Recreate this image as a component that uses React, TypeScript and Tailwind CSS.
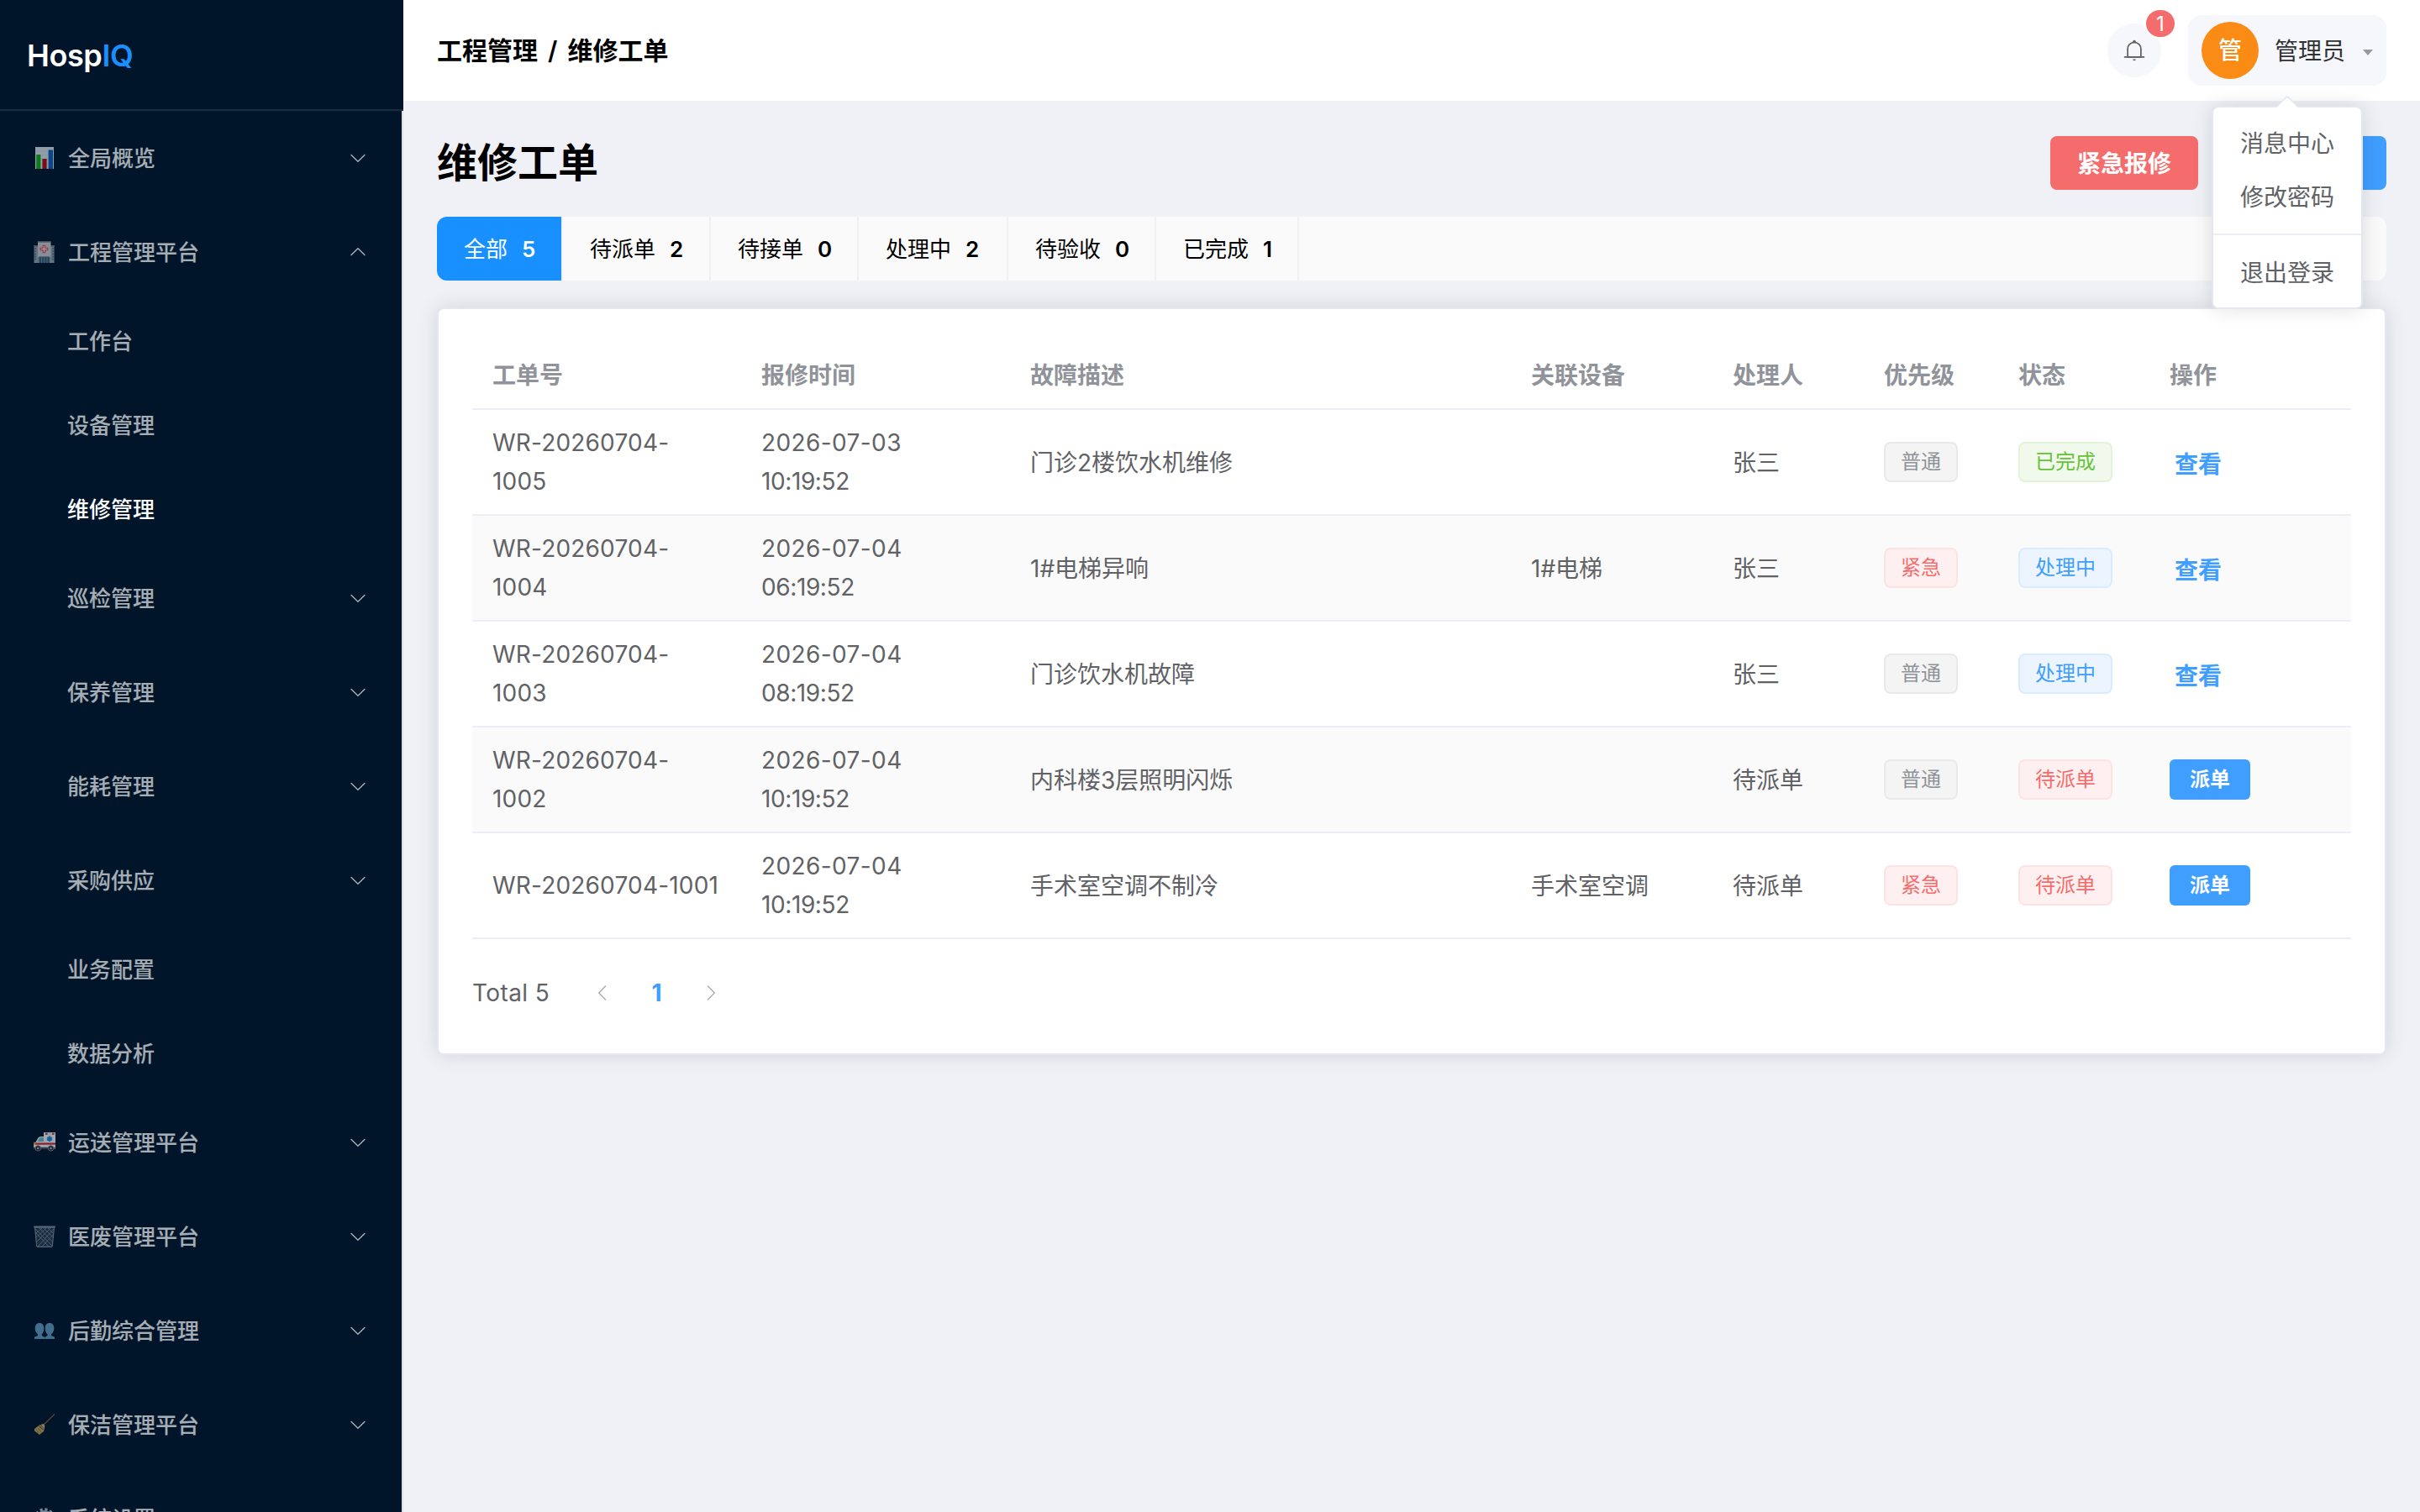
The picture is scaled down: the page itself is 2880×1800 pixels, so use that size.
import { ReactNode } from 'react';
import clsx from 'clsx';

interface MenuItem {
    label: string;
    icon?: ReactNode;
    arrow?: 'down' | 'up';
    active?: boolean;
}

interface Order {
    id: string[];
    date: string;
    time: string;
    fault: string;
    device: string;
    handler: string;
    priority: '普通' | '紧急';
    status: '已完成' | '处理中' | '待派单';
}

const ChartIcon = () => (
    <svg viewBox="0 0 26 26" className="size-[26px]">
        <rect x="2" y="0" width="22" height="26" fill="#dfe8ee" />
        <path d="M2 5h22M2 10h22M2 15h22M2 20h22" stroke="#c3d0da" strokeWidth="0.6" />
        <rect x="3.2" y="9" width="5.2" height="17" fill="#12b312" />
        <rect x="10.4" y="14" width="5.2" height="12" fill="#bd0a12" />
        <rect x="17.6" y="3.5" width="5.4" height="22.5" fill="#0d5fc0" />
    </svg>
);

const HospitalIcon = () => (
    <svg viewBox="0 0 26 26" className="size-[26px]">
        <rect x="0.5" y="5.5" width="24" height="20.5" fill="#9aa5ab" />
        <rect x="0" y="5" width="25" height="1.6" fill="#77736f" />
        <rect x="5" y="0.8" width="15.5" height="18" fill="#cfd0d3" />
        <rect x="4.8" y="0" width="16" height="1.6" fill="#77736f" />
        <path d="M2 8v15M23 8v15" stroke="#3f7184" strokeWidth="1.6" strokeDasharray="1.8 1.4" />
        <path
            d="M11.2 5.2h2.6v3h3v2.6h-3v3h-2.6v-3h-3V8.2h3z"
            fill="#f3dfe2"
            stroke="#e2444f"
            strokeWidth="1.1"
        />
        <rect x="6.5" y="18.5" width="12.5" height="7.5" fill="#3d6076" />
        <path d="M9.5 19v7M12.7 19v7M16 19v7" stroke="#7fa0b0" strokeWidth="0.7" />
    </svg>
);

const AmbulanceIcon = () => (
    <svg viewBox="0 0 26 26" className="size-[26px]">
        <path d="M12 1h14v20H0v-6l2.5-2.5L5.500 7.500Q6.500 6 8.500 6H12z" fill="#f4f6f8" />
        <path d="M4.500 12l2.700-4.200Q7.800 7 9 7h3v5z" fill="#6fbccd" />
        <rect x="12.5" y="1" width="13.500" height="3" fill="#e3e6ea" />
        <rect x="14" y="1.800" width="2.500" height="2" fill="#d8262c" />
        <rect x="22" y="1.800" width="2.500" height="2" fill="#d8262c" />
        <path d="M19 5.500v6.500M16.200 7.200l5.600 3.200M21.800 7.200l-5.600 3.200" stroke="#1789e0" strokeWidth="2.200" />
        <rect x="1" y="13.500" width="25" height="2.200" fill="#e0222a" />
        <rect x="0" y="12.800" width="2.500" height="3" fill="#f0a33a" />
        <rect x="0" y="18.800" width="25.500" height="2.400" fill="#4b4e55" />
        <circle cx="5.200" cy="20" r="3.200" fill="#24272c" stroke="#85898f" />
        <circle cx="5.200" cy="20" r="1.300" fill="#b8bcc2" />
        <circle cx="20.500" cy="20" r="3.200" fill="#24272c" stroke="#85898f" />
        <circle cx="20.500" cy="20" r="1.300" fill="#b8bcc2" />
    </svg>
);

const TrashIcon = () => (
    <svg viewBox="0 0 26 26" className="size-[26px]">
        <path d="M1 2h24l-2.500 23q0 1-1.500 1H5q-1.500 0-1.500-1z" fill="#2b3a4a" />
        <path
            d="M2 8l16 17M2 4l20 20M7 3l16 17M12 3l12 12M17 3l7 7M24 4L5 25M24 10L10 25M20 3L3 20M15 3L2 15M10 3L2 10"
            stroke="#8296aa"
            strokeWidth="0.8"
        />
        <path d="M1.500 2l2.200 23M24.500 2l-2.200 23" stroke="#8296aa" strokeWidth="1" />
        <rect x="0" y="0.500" width="26" height="2.200" rx="1.100" fill="#8296aa" />
        <path d="M4 25.300h18" stroke="#8296aa" strokeWidth="1.200" />
    </svg>
);

const PeopleIcon = () => (
    <svg viewBox="0 0 26 26" className="size-[26px]">
        <g fill="#669cc2">
            <path d="M7 4c3.500 0 5.300 2.400 5.300 6.500 0 3-1 5.500-2.500 7v1.500l3.500 2V23H1v-2.200L5 19v-1.500c-1.900-1.500-3.300-4-3.300-7C1.700 6.400 3.500 4 7 4z" />
            <path d="M19 4c3.500 0 5.300 2.400 5.300 6.500 0 3-1.400 5.500-3.300 7V19l4 1.800V23H13.300v-2l3.200-2v-1.500c-1.700-1.500-2.800-4-2.800-7C13.700 6.400 15.500 4 19 4z" />
        </g>
    </svg>
);

const BroomIcon = () => (
    <svg viewBox="0 0 26 26" className="size-[26px]">
        <path d="M11.500 13.500L25 0.500" stroke="#8a5c38" strokeWidth="1.300" />
        <path d="M7.500 13l5.500 4.500-1 3.500-5 4L1 20.500 1 18z" fill="#c0a860" />
        <path d="M6.500 14.500l5 4.500" stroke="#8a4a30" strokeWidth="1.200" />
        <path d="M8.500 13l3-1 2 2.500-.8 3z" fill="#d3bc74" />
        <path d="M3 18.500l3 5M5.500 17l3.500 5.500" stroke="#7d6a35" strokeWidth="0.8" />
    </svg>
);

const GearIcon = () => (
    <svg viewBox="0 0 26 26" className="size-[26px]">
        <circle cx="13" cy="13" r="8.5" fill="none" stroke="#b4c2d0" strokeWidth="3" />
        <circle cx="13" cy="13" r="11.2" fill="none" stroke="#b4c2d0" strokeWidth="3" strokeDasharray="3.2 2.664" />
        <circle cx="13" cy="13" r="2.5" fill="#b4c2d0" />
        <path d="M13 5v16M6 9l14 8M20 9L6 17" stroke="#b4c2d0" strokeWidth="1.2" />
    </svg>
);

const ArrowIcon = ({ className }: { className?: string }) => (
    <svg viewBox="0 0 1024 1024" fill="currentColor" className={clsx('size-6', className)}>
        <path d="M831.872 340.864 512 652.672 192.128 340.864a30.592 30.592 0 0 0-42.752 0 29.120 29.120 0 0 0 0 41.600L489.664 714.240a32 32 0 0 0 44.672 0l340.288-331.712a29.120 29.120 0 0 0 0-41.728 30.592 30.592 0 0 0-42.752 0z" />
    </svg>
);

const BellIcon = () => (
    <svg viewBox="0 0 1024 1024" fill="currentColor" className="size-7">
        <path d="M512 64a64 64 0 0 1 64 64v64H448v-64a64 64 0 0 1 64-64" />
        <path d="M256 768h512V448a256 256 0 1 0-512 0zm256-640a320 320 0 0 1 320 320v384H192V448a320 320 0 0 1 320-320" />
        <path d="M96 768h832q32 0 32 32t-32 32H96q-32 0-32-32t32-32m352 128h128a64 64 0 0 1-128 0" />
    </svg>
);

const menu: MenuItem[] = [
    { label: '全局概览', icon: <ChartIcon />, arrow: 'down' },
    { label: '工程管理平台', icon: <HospitalIcon />, arrow: 'up' },
    { label: '工作台' },
    { label: '设备管理' },
    { label: '维修管理', active: true },
    { label: '巡检管理', arrow: 'down' },
    { label: '保养管理', arrow: 'down' },
    { label: '能耗管理', arrow: 'down' },
    { label: '采购供应', arrow: 'down' },
    { label: '业务配置' },
    { label: '数据分析' },
    { label: '运送管理平台', icon: <AmbulanceIcon />, arrow: 'down' },
    { label: '医废管理平台', icon: <TrashIcon />, arrow: 'down' },
    { label: '后勤综合管理', icon: <PeopleIcon />, arrow: 'down' },
    { label: '保洁管理平台', icon: <BroomIcon />, arrow: 'down' },
    { label: '系统设置', icon: <GearIcon />, arrow: 'down' },
];

const tabs = [
    { label: '全部', count: 5, width: 'w-[150px]' },
    { label: '待派单', count: 2, width: 'w-[176px]' },
    { label: '待接单', count: 0, width: 'w-[176px]' },
    { label: '处理中', count: 2, width: 'w-[178px]' },
    { label: '待验收', count: 0, width: 'w-[176px]' },
    { label: '已完成', count: 1, width: 'w-[170px]' },
];

const columns = ['工单号', '报修时间', '故障描述', '关联设备', '处理人', '优先级', '状态', '操作'];

const orders: Order[] = [
    { id: ['WR-20260704-', '1005'], date: '2026-07-03', time: '10:19:52', fault: '门诊2楼饮水机维修', device: '', handler: '张三', priority: '普通', status: '已完成' },
    { id: ['WR-20260704-', '1004'], date: '2026-07-04', time: '06:19:52', fault: '1#电梯异响', device: '1#电梯', handler: '张三', priority: '紧急', status: '处理中' },
    { id: ['WR-20260704-', '1003'], date: '2026-07-04', time: '08:19:52', fault: '门诊饮水机故障', device: '', handler: '张三', priority: '普通', status: '处理中' },
    { id: ['WR-20260704-', '1002'], date: '2026-07-04', time: '10:19:52', fault: '内科楼3层照明闪烁', device: '', handler: '待派单', priority: '普通', status: '待派单' },
    { id: ['WR-20260704-1001'], date: '2026-07-04', time: '10:19:52', fault: '手术室空调不制冷', device: '手术室空调', handler: '待派单', priority: '紧急', status: '待派单' },
];

const tagColors = {
    普通: 'border-[#e9e9eb] bg-[#f4f4f5] text-[#909399]',
    紧急: 'border-[#fde2e2] bg-[#fef0f0] text-[#f56c6c]',
    已完成: 'border-[#e1f3d8] bg-[#f0f9eb] text-[#67c23a]',
    处理中: 'border-[#d9ecff] bg-[#ecf5ff] text-[#409eff]',
    待派单: 'border-[#fde2e2] bg-[#fef0f0] text-[#f56c6c]',
};

const rowGrid = 'grid grid-cols-[320px_320px_596px_240px_180px_160px_180px_240px] items-center border-b-2 border-[#ebeef5]';

function Tag({ text }: { text: keyof typeof tagColors }) {
    return (
        <span
            className={clsx(
                'inline-flex h-12 items-center rounded-lg border-2 px-[18px] text-2xl leading-none',
                tagColors[text],
            )}
        >
            {text}
        </span>
    );
}

function Sidebar() {
    return (
        <aside className="flex w-[480px] shrink-0 flex-col">
            <div className="flex h-[132px] shrink-0 items-center border-b-2 border-white/10 bg-[#001529] pt-0.5 pl-8 text-[36px] font-semibold tracking-[-0.4px] text-white">
                Hosp<span className="text-[#1890ff]">IQ</span>
            </div>
            <nav className="flex-1 overflow-hidden border-r-2 border-[#dcdfe6] bg-[#001529]">
                {menu.map((item) => (
                    <div
                        key={item.label}
                        className={clsx(
                            'flex items-center px-10 text-[26px] font-medium',
                            item.arrow ? 'h-28' : 'h-[100px]',
                            item.active ? 'text-white' : 'text-white/65',
                        )}
                    >
                        <span className={clsx('opacity-65', item.icon ? 'w-[41px]' : 'w-10')}>{item.icon}</span>
                        <span className="flex-1 pt-px">{item.label}</span>
                        {item.arrow && <ArrowIcon className={item.arrow === 'up' ? 'rotate-180' : ''} />}
                    </div>
                ))}
            </nav>
        </aside>
    );
}

function UserMenu() {
    return (
        <div className="absolute top-[108px] left-[28px] z-10 w-[180px] rounded-lg border-2 border-[#e4e7ed] bg-white py-2.5 text-[28px] text-[#606266] shadow-[0_0_24px_rgba(0,0,0,0.12)]">
            <span className="absolute -top-[11px] left-[78px] size-5 rotate-45 rounded-tl-sm border-t-2 border-l-2 border-[#e4e7ed] bg-white" />
            <div className="flex h-16 items-center px-8 pt-0.5">消息中心</div>
            <div className="flex h-16 items-center px-8 pt-0.5">修改密码</div>
            <div className="my-3 h-0.5 bg-[#ebeef5]" />
            <div className="flex h-16 items-center px-8 pt-0.5">退出登录</div>
        </div>
    );
}

function Header() {
    return (
        <header className="flex h-[120px] shrink-0 items-center justify-between bg-white px-10">
            <div className="pt-px text-[30px] font-semibold text-black [word-spacing:4.5px]">工程管理 / 维修工单</div>
            <div className="flex items-center gap-8">
                <div className="relative flex size-16 items-center justify-center rounded-full bg-[#f5f7fb] text-[#606266]">
                    <BellIcon />
                    <span className="absolute -top-[18px] left-11 flex h-9 w-[38px] items-center justify-center rounded-full border-2 border-white bg-[#f56c6c] pt-0.5 text-2xl leading-none text-white">
                        1
                    </span>
                </div>
                <div className="relative flex h-[84px] w-[236px] items-center rounded-2xl bg-[#f5f7fb] px-4">
                    <span className="flex size-[68px] items-center justify-center rounded-full bg-[#fa8c16] text-[28px] font-medium text-white">
                        管
                    </span>
                    <span className="ml-[19px] pt-px text-[28px] text-[#303133]">管理员</span>
                    <svg viewBox="0 0 12 7" className="mt-1 ml-[21px] h-[7px] w-3">
                        <path d="M0 0h12L6 7z" fill="#999" />
                    </svg>
                    <UserMenu />
                </div>
            </div>
        </header>
    );
}

export default function App() {
    return (
        <div className="flex h-[1800px] w-[2880px] overflow-hidden font-['Inter','Noto_Sans_CJK_SC',sans-serif]">
            <Sidebar />
            <div className="flex flex-1 flex-col bg-[#f0f1f6]">
                <Header />
                <main className="flex-1 px-10 pt-[42px]">
                    <div className="flex h-16 items-center justify-between">
                        <h1 className="text-[48px] leading-none font-bold text-black">维修工单</h1>
                        <div className="flex gap-6">
                            <button className="h-16 w-44 rounded-lg bg-[#f56c6c] pt-0.5 text-[28px] font-bold text-white">
                                紧急报修
                            </button>
                            <button className="h-16 w-[200px] rounded-lg bg-[#409eff]" />
                        </div>
                    </div>

                    <div className="mt-8 flex h-[76px] overflow-hidden rounded-xl bg-[#fafafa]">
                        {tabs.map((tab, i) => (
                            <button
                                key={tab.label}
                                className={clsx(
                                    'flex items-center gap-[17px] border-r-2 border-[#f0f0f0] bg-clip-padding pt-px pl-8 text-[26px]',
                                    tab.width,
                                    i === 0 ? 'bg-[#1890ff] text-white' : 'text-black',
                                )}
                            >
                                {tab.label}
                                <span className="font-semibold">{tab.count}</span>
                            </button>
                        ))}
                    </div>

                    <div className="mt-8 rounded-lg border-2 border-[#e4e7ed] bg-white p-10 shadow-[0_0_24px_rgba(0,0,0,0.12)]">
                        <div className="text-[28px] text-[#606266]">
                            <div className={clsx(rowGrid, 'h-20 font-semibold text-[#909399]')}>
                                {columns.map((column) => (
                                    <div key={column} className="px-6">
                                        {column}
                                    </div>
                                ))}
                            </div>
                            {orders.map((order, i) => (
                                <div key={i} className={clsx(rowGrid, 'h-[126px]', i % 2 === 1 && 'bg-[#fafafa]')}>
                                    <div className="px-6 pb-px leading-[46px] tracking-[0.2px] whitespace-nowrap">
                                        {order.id.map((part) => (
                                            <div key={part}>{part}</div>
                                        ))}
                                    </div>
                                    <div className="px-6 pb-px leading-[46px] whitespace-nowrap">
                                        <div className="tracking-[0.4px]">{order.date}</div>
                                        <div className="tracking-[-0.4px]">{order.time}</div>
                                    </div>
                                    <div className="px-6 pt-px">{order.fault}</div>
                                    <div className="px-6 pt-px">{order.device}</div>
                                    <div className="px-6 pt-px">{order.handler}</div>
                                    <div className="flex px-6">
                                        <Tag text={order.priority} />
                                    </div>
                                    <div className="flex px-6">
                                        <Tag text={order.status} />
                                    </div>
                                    <div className="flex px-6">
                                        {order.status === '待派单' ? (
                                            <button className="h-12 w-24 rounded-md bg-[#409eff] text-2xl font-bold text-white">
                                                派单
                                            </button>
                                        ) : (
                                            <button className="px-1.5 pt-[5px] font-bold text-[#409eff]">查看</button>
                                        )}
                                    </div>
                                </div>
                            ))}
                        </div>

                        <div className="mt-8 flex h-16 items-center text-[28px] text-[#606266]">
                            <span className="w-[123px] tracking-[0.4px] whitespace-nowrap">Total 5</span>
                            <span className="flex w-16 justify-center text-[#a8abb2]">
                                <ArrowIcon className="rotate-90" />
                            </span>
                            <span className="w-[65px] text-center font-bold text-[#409eff]">1</span>
                            <span className="flex w-16 justify-center text-[#a8abb2]">
                                <ArrowIcon className="-rotate-90" />
                            </span>
                        </div>
                    </div>
                </main>
            </div>
        </div>
    );
}
